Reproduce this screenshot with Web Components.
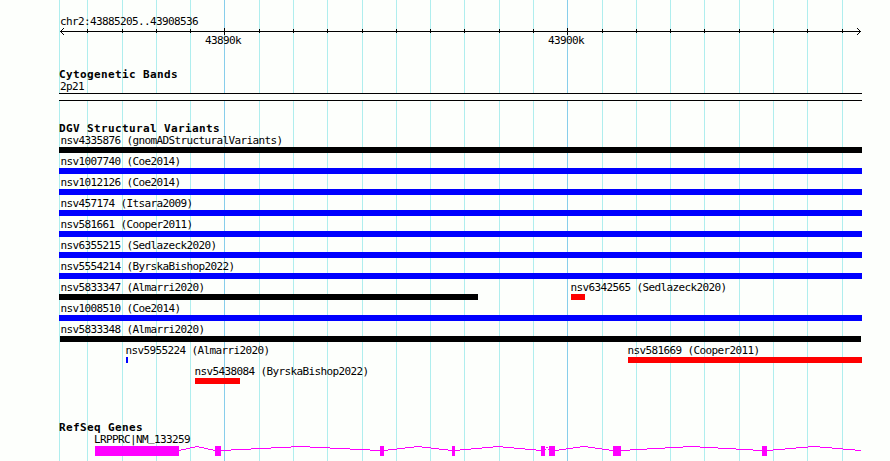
<!DOCTYPE html>
<html lang="en">
<head>
<meta charset="utf-8">
<title>chr2:43885205..43908536</title>
<style>
  body {
    margin: 0;
    background: #fdfffc;
    color: #000;
    font: 11px/12px "DejaVu Sans Mono", monospace;
  }
</style>
</head>
<body>
<genome-browser>
  <scale-ruler region="chr2:43885205..43908536"></scale-ruler>
  <browser-track name="Cytogenetic Bands" style="margin-top: 23px">
    <cyto-band name="2p21"></cyto-band>
  </browser-track>
  <browser-track name="DGV Structural Variants" style="margin-top: 22px">
    <feature-row><variant-bar start="59" end="862" color="#000">nsv4335876 (gnomADStructuralVariants)</variant-bar></feature-row>
    <feature-row><variant-bar start="59" end="862" color="#00f">nsv1007740 (Coe2014)</variant-bar></feature-row>
    <feature-row><variant-bar start="59" end="862" color="#00f">nsv1012126 (Coe2014)</variant-bar></feature-row>
    <feature-row><variant-bar start="59" end="862" color="#00f">nsv457174 (Itsara2009)</variant-bar></feature-row>
    <feature-row><variant-bar start="59" end="862" color="#00f">nsv581661 (Cooper2011)</variant-bar></feature-row>
    <feature-row><variant-bar start="59" end="862" color="#00f">nsv6355215 (Sedlazeck2020)</variant-bar></feature-row>
    <feature-row><variant-bar start="59" end="862" color="#00f">nsv5554214 (ByrskaBishop2022)</variant-bar></feature-row>
    <feature-row>
      <variant-bar start="59" end="478" color="#000">nsv5833347 (Almarri2020)</variant-bar>
      <variant-bar start="571" end="585" color="#f00">nsv6342565 (Sedlazeck2020)</variant-bar>
    </feature-row>
    <feature-row><variant-bar start="59" end="862" color="#00f">nsv1008510 (Coe2014)</variant-bar></feature-row>
    <feature-row><variant-bar start="60" end="861" color="#000">nsv5833348 (Almarri2020)</variant-bar></feature-row>
    <feature-row>
      <variant-bar start="126" end="128" color="#00f">nsv5955224 (Almarri2020)</variant-bar>
      <variant-bar start="628" end="862" color="#f00">nsv581669 (Cooper2011)</variant-bar>
    </feature-row>
    <feature-row><variant-bar start="195" end="240" color="#f00">nsv5438084 (ByrskaBishop2022)</variant-bar></feature-row>
  </browser-track>
  <browser-track name="RefSeq Genes" style="margin-top: 35px">
    <gene-model name="LRPPRC|NM_133259" exons="95-179 215-221 380-384 452-455 541-545 549-555 613-621 762-767" end="861"></gene-model>
  </browser-track>
</genome-browser>

<script>
// x of every kilobase line, the 10k lines are drawn darker
const KB_LINES = [87, 122, 156, 190, 224, 259, 293, 327, 362, 396, 430, 464, 499,
  533, 567, 602, 636, 670, 704, 739, 773, 807, 842];
const MAJOR = { 224: "43890k", 567: "43900k" };
const LEFT = 59;

// whole panel: grid lines and tracks share one grid cell
class GenomeBrowser extends HTMLElement {
  connectedCallback() {
    const shadow = this.attachShadow({ mode: "open" });
    const lines = [LEFT, ...KB_LINES].map(x =>
      `<rect x="${x}" y="0" width="1" height="461" fill="${MAJOR[x] ? "#87ceeb" : "#afeeee"}"/>`).join("");
    shadow.innerHTML = `
      <style>
        :host { display: grid; width: 890px; height: 461px; overflow: hidden; }
        svg, main { grid-area: 1 / 1; }
        main { display: flex; flex-direction: column; min-width: 0; z-index: 1; }
      </style>
      <svg width="890" height="461" shape-rendering="crispEdges">${lines}</svg>
      <main><slot></slot></main>`;
  }
}

// region name, the arrow with its ticks, and the 10k labels
class ScaleRuler extends HTMLElement {
  connectedCallback() {
    const shadow = this.attachShadow({ mode: "open" });
    const ticks = KB_LINES.map(x => MAJOR[x]
      ? `<rect x="${x}" y="1" width="1" height="7"/>`
      : `<rect x="${x}" y="2" width="1" height="4"/>`).join("");
    let heads = "";
    for (let i = 1; i <= 3; i++) {
      for (const x of [60 + i, 860 - i]) {
        heads += `M${x} ${4 - i}h1v1h-1zM${x} ${4 + i}h1v1h-1z`;
      }
    }
    let from = 0;
    const labels = Object.keys(MAJOR).map(x => {
      const left = x - 19;
      const html = `<span style="margin-left:${left - from}px">${MAJOR[x]}</span>`;
      from = left + 36;
      return html;
    }).join("");
    shadow.innerHTML = `
      <style>
        :host { display: flex; flex-direction: column; height: 46px; padding-top: 16px; box-sizing: border-box; letter-spacing: -.622px; }
        .region { padding-left: 60px; height: 11px; }
        svg { height: 8px; width: 890px; flex: none; }
        .labels { display: flex; height: 11px; }
        .labels span { width: 36px; white-space: nowrap; }
      </style>
      <div class="region">${this.getAttribute("region")}</div>
      <svg viewBox="0 0 890 8" shape-rendering="crispEdges">
        <rect x="60" y="4" width="801" height="1"/>
        ${ticks}
        <path d="${heads}"/>
      </svg>
      <div class="labels">${labels}</div>`;
  }
}

class BrowserTrack extends HTMLElement {
  connectedCallback() {
    const shadow = this.attachShadow({ mode: "open" });
    shadow.innerHTML = `
      <style>
        :host { display: block; flex: none; }
        h2 { margin: 0 0 0 59px; height: 12px; font: bold 11px/12px "DejaVu Sans Mono", monospace; letter-spacing: .378px; }
      </style>
      <h2>${this.getAttribute("name")}</h2>
      <slot></slot>`;
  }
}

class CytoBand extends HTMLElement {
  connectedCallback() {
    const shadow = this.attachShadow({ mode: "open" });
    shadow.innerHTML = `
      <style>
        :host { display: block; letter-spacing: -.622px; }
        .name { padding-left: 60px; height: 12px; }
        .band { margin-left: 59px; width: 803px; height: 8px; box-sizing: border-box; background: #fdfffc; border: solid #000; border-width: 1px 0; }
      </style>
      <div class="name">${this.getAttribute("name")}</div>
      <div class="band"></div>`;
  }
}

// features in one row overlap in the same cell, each is pushed right to its start
class FeatureRow extends HTMLElement {
  connectedCallback() {
    const shadow = this.attachShadow({ mode: "open" });
    shadow.innerHTML = `
      <style>
        :host { display: grid; height: 21px; }
        ::slotted(*) { grid-area: 1 / 1; }
      </style>
      <slot></slot>`;
  }
}

class VariantBar extends HTMLElement {
  connectedCallback() {
    const shadow = this.attachShadow({ mode: "open" });
    const start = Number(this.getAttribute("start"));
    const width = this.getAttribute("end") - start;
    shadow.innerHTML = `
      <style>
        :host { display: block; margin-left: ${start}px; letter-spacing: -.622px; white-space: nowrap; }
        .label { height: 12px; margin-left: ${Math.max(60.4, start - .6) - start}px; }
        .bar { width: ${width}px; height: 6px; background: ${this.getAttribute("color")}; }
      </style>
      <div class="label"><slot></slot></div>
      <div class="bar"></div>`;
  }
}

// exons as boxes, introns as shallow peaks between them
class GeneModel extends HTMLElement {
  connectedCallback() {
    const shadow = this.attachShadow({ mode: "open" });
    const exons = this.getAttribute("exons").split(" ").map(e => e.split("-").map(Number));
    const end = Number(this.getAttribute("end"));
    const boxes = exons.map(([a, b]) => `<rect x="${a}" y="0" width="${b - a}" height="10"/>`).join("");
    // one pixel high runs, so that the slopes stay stepped
    let steps = "";
    exons.forEach(([, a], i) => {
      const b = exons[i + 1] ? exons[i + 1][0] : end;
      const half = (b - a) / 2;
      for (let x = a; x < b; x++) {
        const rise = 1 - Math.abs(x + .5 - a - half) / half;
        steps += `M${x} ${4 - Math.round(rise * 4)}h1v1h-1z`;
      }
    });
    // the underscore is lifted clear of the first exon
    const name = this.getAttribute("name").replace("_", "<span>_</span>");
    shadow.innerHTML = `
      <style>
        :host { display: block; letter-spacing: -.622px; }
        .name { margin-left: ${exons[0][0] - 1}px; height: 12px; }
        .name span { vertical-align: 2px; line-height: 0; }
        svg { display: block; fill: #f0f; }
      </style>
      <div class="name">${name}</div>
      <svg width="890" height="10" shape-rendering="crispEdges">${boxes}<path d="${steps}"/></svg>`;
  }
}

customElements.define("genome-browser", GenomeBrowser);
customElements.define("scale-ruler", ScaleRuler);
customElements.define("browser-track", BrowserTrack);
customElements.define("cyto-band", CytoBand);
customElements.define("feature-row", FeatureRow);
customElements.define("variant-bar", VariantBar);
customElements.define("gene-model", GeneModel);
</script>
</body>
</html>
